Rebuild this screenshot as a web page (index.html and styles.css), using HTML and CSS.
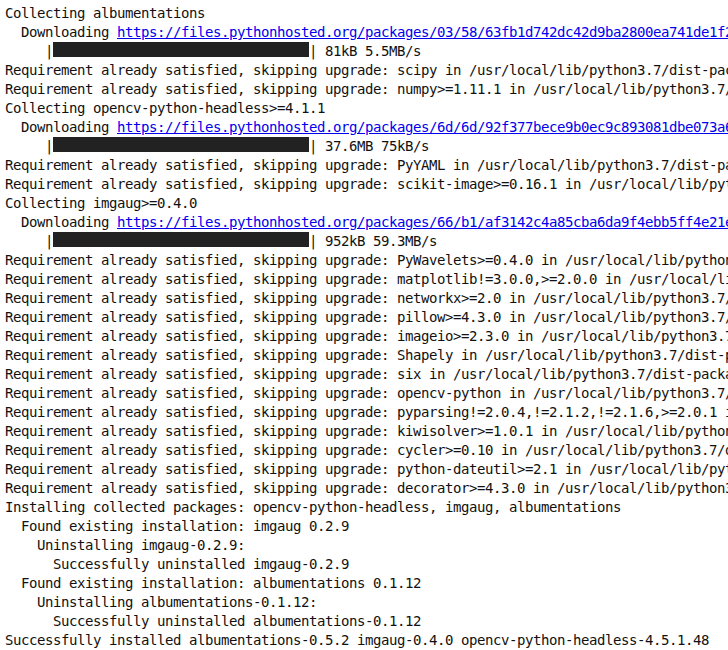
FILE: index.html
```html
<!DOCTYPE html>
<html>
<head>
<meta charset="utf-8">
<link rel="stylesheet" href="styles.css">
</head>
<body>
<div class="output">
<div class="ln">Collecting albumentations</div>
<div class="ln">  Downloading <a class="url" href="#">https://files.pythonhosted.org/packages/03/58/63fb1d742dc42d9ba2800ea741de1f2ac6cbc2a2fa3fc82e8/albumentations-0.5.2-py3-none-any.whl</a></div>
<div class="ln">     |<span class="bar"></span>| 81kB 5.5MB/s</div>
<div class="ln">Requirement already satisfied, skipping upgrade: scipy in /usr/local/lib/python3.7/dist-packages (from albumentations) (1.4.1)</div>
<div class="ln">Requirement already satisfied, skipping upgrade: numpy&gt;=1.11.1 in /usr/local/lib/python3.7/dist-packages (from albumentations) (1.19.5)</div>
<div class="ln">Collecting opencv-python-headless&gt;=4.1.1</div>
<div class="ln">  Downloading <a class="url" href="#">https://files.pythonhosted.org/packages/6d/6d/92f377bece9b0ec9c893081dbe073a6d2a4b1ec1e85a1ffb2/opencv_python_headless-4.5.1.48-cp37-cp37m-manylinux2014_x86_64.whl</a></div>
<div class="ln">     |<span class="bar"></span>| 37.6MB 75kB/s</div>
<div class="ln">Requirement already satisfied, skipping upgrade: PyYAML in /usr/local/lib/python3.7/dist-packages (from albumentations) (3.13)</div>
<div class="ln">Requirement already satisfied, skipping upgrade: scikit-image&gt;=0.16.1 in /usr/local/lib/python3.7/dist-packages (from albumentations) (0.16.2)</div>
<div class="ln">Collecting imgaug&gt;=0.4.0</div>
<div class="ln">  Downloading <a class="url" href="#">https://files.pythonhosted.org/packages/66/b1/af3142c4a85cba6da9f4ebb5ff4e21e2616309552caca5e8a/imgaug-0.4.0-py2.py3-none-any.whl</a></div>
<div class="ln">     |<span class="bar"></span>| 952kB 59.3MB/s</div>
<div class="ln">Requirement already satisfied, skipping upgrade: PyWavelets&gt;=0.4.0 in /usr/local/lib/python3.7/dist-packages (from scikit-image&gt;=0.16.1-&gt;albumentations) (1.1.1)</div>
<div class="ln">Requirement already satisfied, skipping upgrade: matplotlib!=3.0.0,&gt;=2.0.0 in /usr/local/lib/python3.7/dist-packages (from scikit-image&gt;=0.16.1-&gt;albumentations) (3.2.2)</div>
<div class="ln">Requirement already satisfied, skipping upgrade: networkx&gt;=2.0 in /usr/local/lib/python3.7/dist-packages (from scikit-image&gt;=0.16.1-&gt;albumentations) (2.5)</div>
<div class="ln">Requirement already satisfied, skipping upgrade: pillow&gt;=4.3.0 in /usr/local/lib/python3.7/dist-packages (from scikit-image&gt;=0.16.1-&gt;albumentations) (7.0.0)</div>
<div class="ln">Requirement already satisfied, skipping upgrade: imageio&gt;=2.3.0 in /usr/local/lib/python3.7/dist-packages (from scikit-image&gt;=0.16.1-&gt;albumentations) (2.4.1)</div>
<div class="ln">Requirement already satisfied, skipping upgrade: Shapely in /usr/local/lib/python3.7/dist-packages (from imgaug&gt;=0.4.0-&gt;albumentations) (1.7.1)</div>
<div class="ln">Requirement already satisfied, skipping upgrade: six in /usr/local/lib/python3.7/dist-packages (from imgaug&gt;=0.4.0-&gt;albumentations) (1.15.0)</div>
<div class="ln">Requirement already satisfied, skipping upgrade: opencv-python in /usr/local/lib/python3.7/dist-packages (from imgaug&gt;=0.4.0-&gt;albumentations) (4.1.2.30)</div>
<div class="ln">Requirement already satisfied, skipping upgrade: pyparsing!=2.0.4,!=2.1.2,!=2.1.6,&gt;=2.0.1 in /usr/local/lib/python3.7/dist-packages (from matplotlib) (2.4.7)</div>
<div class="ln">Requirement already satisfied, skipping upgrade: kiwisolver&gt;=1.0.1 in /usr/local/lib/python3.7/dist-packages (from matplotlib) (1.3.1)</div>
<div class="ln">Requirement already satisfied, skipping upgrade: cycler&gt;=0.10 in /usr/local/lib/python3.7/dist-packages (from matplotlib) (0.10.0)</div>
<div class="ln">Requirement already satisfied, skipping upgrade: python-dateutil&gt;=2.1 in /usr/local/lib/python3.7/dist-packages (from matplotlib) (2.8.1)</div>
<div class="ln">Requirement already satisfied, skipping upgrade: decorator&gt;=4.3.0 in /usr/local/lib/python3.7/dist-packages (from networkx&gt;=2.0) (4.4.2)</div>
<div class="ln">Installing collected packages: opencv-python-headless, imgaug, albumentations</div>
<div class="ln">  Found existing installation: imgaug 0.2.9</div>
<div class="ln">    Uninstalling imgaug-0.2.9:</div>
<div class="ln">      Successfully uninstalled imgaug-0.2.9</div>
<div class="ln">  Found existing installation: albumentations 0.1.12</div>
<div class="ln">    Uninstalling albumentations-0.1.12:</div>
<div class="ln">      Successfully uninstalled albumentations-0.1.12</div>
<div class="ln">Successfully installed albumentations-0.5.2 imgaug-0.4.0 opencv-python-headless-4.5.1.48</div>
</div>
</body>
</html>
```
FILE: styles.css
```css
html, body {
  margin: 0;
  padding: 0;
  background: #ffffff;
  overflow: hidden;
}
.output {
  padding: 4px 0 0 5px;
  font-family: "DejaVu Sans Mono", monospace;
  font-size: 14px;
  letter-spacing: -0.4287px;
  color: #111111;
  width: 723px;
  overflow: hidden;
}
.ln {
  height: 19px;
  line-height: 19px;
  white-space: pre;
  overflow: hidden;
}
.url {
  color: #0000ee;
  text-decoration: underline;
}
.bar {
  display: inline-block;
  width: 256px;
  height: 15px;
  background: #222222;
  vertical-align: top;
}
```
